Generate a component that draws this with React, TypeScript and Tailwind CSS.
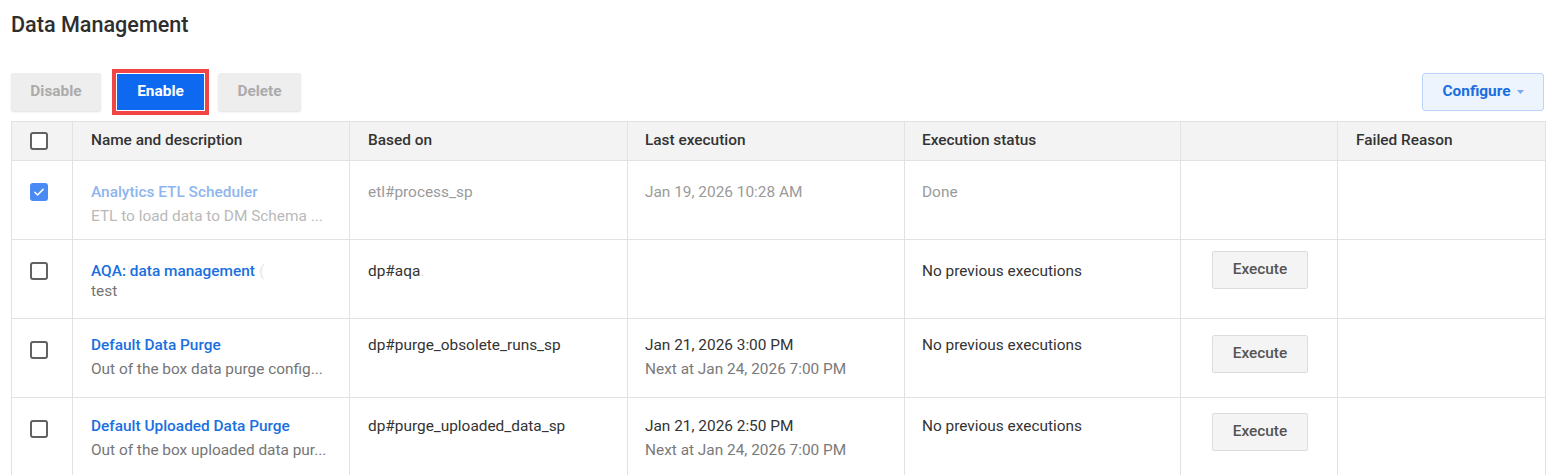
import React from "react";

const font = { fontFamily: "Roboto, 'Noto Sans', Arial, sans-serif" };

function Checkbox({ checked }: { checked?: boolean }) {
  if (checked) {
    return (
      <span className="flex h-[18px] w-[18px] items-center justify-center rounded-[3px] bg-[#4a8af4]">
        <svg width="14" height="14" viewBox="0 0 24 24" fill="none">
          <path d="M5 12.5l4.5 4.5L19 7.5" stroke="white" strokeWidth="2.6" strokeLinecap="round" strokeLinejoin="round" />
        </svg>
      </span>
    );
  }
  return <span className="block h-[18px] w-[18px] rounded-[3px] border-2 border-[#616161] bg-white" />;
}

type Row = {
  checked?: boolean;
  faded?: boolean;
  name: string;
  nameTail?: string;
  desc: string;
  descGap: string;
  based: string;
  basedTail?: string;
  last?: string;
  next?: string;
  status: string;
  execute?: boolean;
  pt: string;
  btnPt: string;
};

const rows: Row[] = [
  {
    checked: true,
    faded: true,
    name: "Analytics ETL Scheduler",
    desc: "ETL to load data to DM Schema ...",
    descGap: "mt-[2px]",
    based: "etl#process_sp",
    last: "Jan 19, 2026 10:28 AM",
    status: "Done",
    pt: "pt-[20px]",
    btnPt: "pt-[11px]",
  },
  {
    name: "AQA: data management",
    nameTail: "(",
    desc: "test",
    descGap: "-mt-[2px]",
    based: "dp#aqa",
    basedTail: ".",
    status: "No previous executions",
    execute: true,
    pt: "pt-[20px]",
    btnPt: "pt-[11px]",
  },
  {
    name: "Default Data Purge",
    desc: "Out of the box data purge config...",
    descGap: "mt-[2px]",
    based: "dp#purge_obsolete_runs_sp",
    last: "Jan 21, 2026 3:00 PM",
    next: "Next at Jan 24, 2026 7:00 PM",
    status: "No previous executions",
    execute: true,
    pt: "pt-[15px]",
    btnPt: "pt-[16px]",
  },
  {
    name: "Default Uploaded Data Purge",
    desc: "Out of the box uploaded data pur...",
    descGap: "mt-[2px]",
    based: "dp#purge_uploaded_data_sp",
    last: "Jan 21, 2026 2:50 PM",
    next: "Next at Jan 24, 2026 7:00 PM",
    status: "No previous executions",
    execute: true,
    pt: "pt-[17px]",
    btnPt: "pt-[15px]",
  },
];

function TableRow({ r }: { r: Row }) {
  const main = r.faded ? "text-[#9a9a9a]" : "text-[#333333]";
  return (
    <div className="flex h-[79px] border-b border-[#e2e2e2] text-[15.4px]">
      <div className={`w-[61px] shrink-0 border-r border-[#e2e2e2] pl-[18px] pt-[22px]`}>
        <Checkbox checked={r.checked} />
      </div>
      <div className={`w-[277px] shrink-0 border-r border-[#e2e2e2] pl-[18px] pr-3 ${r.pt}`}>
        <div className={`font-medium leading-[22px] ${r.faded ? "text-[#8fb5ef]" : "text-[#1a6fe0]"}`}>
          {r.name}
          {r.nameTail && <span className="ml-[4px] font-normal text-[#e4e8ee]">{r.nameTail}</span>}
        </div>
        <div className={`${r.descGap} truncate leading-[22px] ${r.faded ? "text-[#b9b9b9]" : "text-[#757575]"}`}>
          {r.desc}
        </div>
      </div>
      <div className={`w-[278px] shrink-0 border-r border-[#e2e2e2] pl-[18px] ${r.pt} leading-[22px] ${main}`}>
        {r.based}
        {r.basedTail && <span className="text-[#cfcfcf]">{r.basedTail}</span>}
      </div>
      <div className={`w-[277px] shrink-0 border-r border-[#e2e2e2] pl-[17px] ${r.pt} leading-[22px]`}>
        {r.last && <div className={main}>{r.last}</div>}
        {r.next && <div className="mt-[2px] text-[#7a7a7a]">{r.next}</div>}
      </div>
      <div className={`w-[276px] shrink-0 border-r border-[#e2e2e2] pl-[17px] ${r.pt} leading-[22px] ${main}`}>
        {r.status}
      </div>
      <div className={`w-[157px] shrink-0 border-r border-[#e2e2e2] pl-[31px] ${r.btnPt}`}>
        {r.execute && (
          <button className="h-[38px] w-[96px] rounded-[2px] border border-[#dcdcdc] bg-[#f4f4f4] text-[15.4px] font-medium text-[#555555]">
            Execute
          </button>
        )}
      </div>
      <div className="w-[207px] shrink-0" />
    </div>
  );
}

export default function App() {
  return (
    <div className="h-[475px] overflow-hidden bg-white" style={font}>
      <h1 className="pl-[11px] pt-[11px] text-[21.6px] font-medium leading-[28px] text-[#2e2e2e]">Data Management</h1>

      <div className="mt-[30px] flex items-center pl-[11px] pr-[23px]">
        <button className="h-[38px] w-[90px] rounded-[3px] bg-[#eeeeee] text-[15.4px] font-bold text-[#ababab] shadow-[0_1px_2px_rgba(0,0,0,0.12)]">
          Disable
        </button>
        <div className="ml-[11px] border-[4px] border-[#f04545] p-px">
          <button className="h-[36px] w-[87px] bg-[#0d6af0] text-[15.4px] font-bold text-white">Enable</button>
        </div>
        <button className="ml-[9px] h-[38px] w-[83px] rounded-[3px] bg-[#eeeeee] text-[15.4px] font-bold text-[#ababab] shadow-[0_1px_2px_rgba(0,0,0,0.12)]">
          Delete
        </button>
        <div className="flex-1" />
        <button className="flex h-[38px] w-[122px] items-center justify-center gap-[6px] rounded-[3px] border border-[#bcd5fb] bg-[#eef4fe] text-[15.4px] font-bold text-[#1a6fe0]">
          Configure
          <svg width="7" height="4" viewBox="0 0 7 4">
            <path d="M0 0h7L3.5 4z" fill="#7aa8ee" />
          </svg>
        </button>
      </div>

      <div className="ml-[11px] mt-[6px] w-[1535px] border-x border-t border-[#e2e2e2]">
        <div className="flex h-[39px] border-b border-[#e2e2e2] bg-[#f3f3f3] text-[15.4px] font-medium text-[#333333]">
          <div className="flex w-[61px] shrink-0 items-center border-r border-[#e2e2e2] pl-[18px]">
            <Checkbox />
          </div>
          <div className="flex w-[277px] shrink-0 items-center border-r border-[#e2e2e2] pl-[18px]">Name and description</div>
          <div className="flex w-[278px] shrink-0 items-center border-r border-[#e2e2e2] pl-[18px]">Based on</div>
          <div className="flex w-[277px] shrink-0 items-center border-r border-[#e2e2e2] pl-[17px]">Last execution</div>
          <div className="flex w-[276px] shrink-0 items-center border-r border-[#e2e2e2] pl-[17px]">Execution status</div>
          <div className="w-[157px] shrink-0 border-r border-[#e2e2e2]" />
          <div className="flex w-[207px] shrink-0 items-center pl-[18px]">Failed Reason</div>
        </div>
        {rows.map((r) => (
          <TableRow key={r.name} r={r} />
        ))}
      </div>
    </div>
  );
}
